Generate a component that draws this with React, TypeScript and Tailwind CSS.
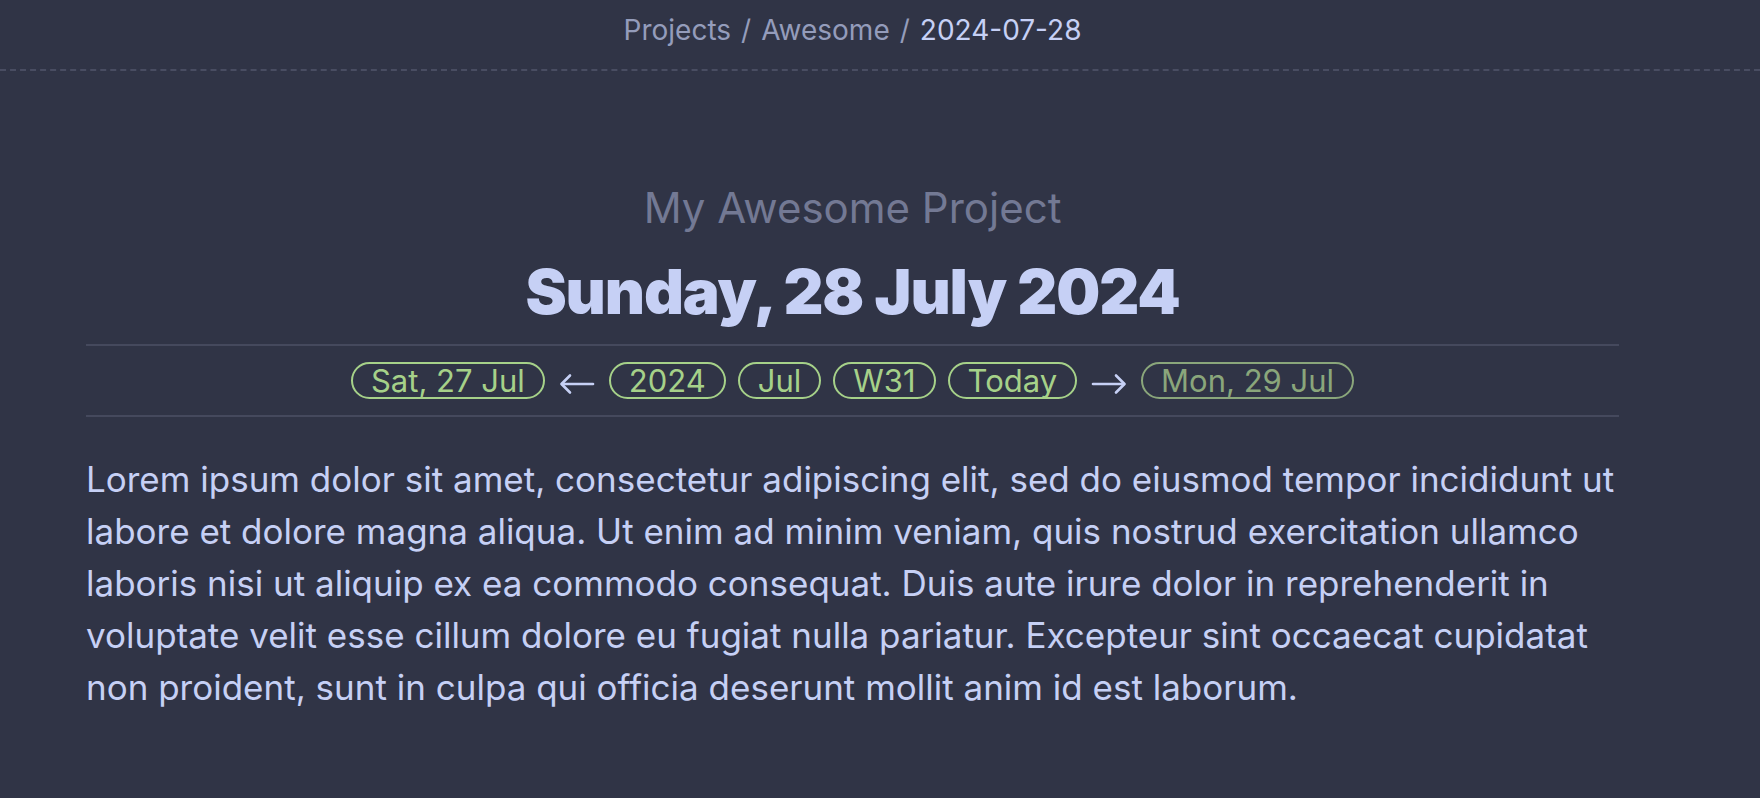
import React from 'react';

const pills = ['2024', 'Jul', 'W31', 'Today'];

const Pill: React.FC<{ label: string; dim?: boolean }> = ({ label, dim }) => (
  <span
    className={`inline-flex items-center rounded-full border-2 px-[18px] text-[31px] leading-[33px] ${
      dim ? 'border-[#8aa67b] text-[#8aa67b]' : 'border-[#a6d189] text-[#a6d189]'
    }`}
  >
    {label}
  </span>
);

// long thin arrow, like the one in the nav row
const Arrow: React.FC<{ dir: 'left' | 'right' }> = ({ dir }) => (
  <svg
    width="36"
    height="24"
    viewBox="0 0 36 24"
    fill="none"
    stroke="#c6d0f5"
    strokeWidth="2.6"
    strokeLinecap="round"
    strokeLinejoin="round"
    className={`mx-[2px] mt-[6px] ${dir === 'right' ? 'rotate-180' : ''}`}
  >
    <path d="M3 12h31" />
    <path d="M11 3.5 2.5 12l8.5 8.5" />
  </svg>
);

export default function App() {
  return (
    <div
      className="min-h-screen bg-[#303446] text-[#c6d0f5]"
      style={{ fontFamily: 'Inter, "Noto Sans", sans-serif' }}
    >
      <header className="flex h-[71px] items-center border-b-2 border-dashed border-[#494d62]">
        <nav className="ml-[86px] flex w-[1533px] justify-center gap-[10px] pb-[9px] text-[28px] text-[#949cbb]">
          <span>Projects</span>
          <span>/</span>
          <span>Awesome</span>
          <span>/</span>
          <span className="text-[#c6d0f5]">2024-07-28</span>
        </nav>
      </header>

      <main className="ml-[86px] w-[1533px]">
        <div className="pt-[112px] text-center">
          <p className="text-[42px] leading-[50px] text-[#737994]">My Awesome Project</p>
          <h1 className="mt-[24px] text-[62px] leading-[70px] font-black tracking-[-0.018em] text-[#c6d0f5]">
            Sunday, 28 July 2024
          </h1>
        </div>

        <div className="mt-[17px] flex items-center justify-center gap-[12px] border-y-2 border-[#45495d] py-[16px]">
          <Pill label="Sat, 27 Jul" />
          <Arrow dir="left" />
          {pills.map((p) => (
            <Pill key={p} label={p} />
          ))}
          <Arrow dir="right" />
          <Pill label="Mon, 29 Jul" dim />
        </div>

        <p className="mt-[36px] text-[35px] leading-[52px] text-[#c6d0f5]">
          Lorem ipsum dolor sit amet, consectetur adipiscing elit, sed do eiusmod tempor incididunt ut
          labore et dolore magna aliqua. Ut enim ad minim veniam, quis nostrud exercitation ullamco
          laboris nisi ut aliquip ex ea commodo consequat. Duis aute irure dolor in reprehenderit in
          voluptate velit esse cillum dolore eu fugiat nulla pariatur. Excepteur sint occaecat cupidatat
          non proident, sunt in culpa qui officia deserunt mollit anim id est laborum.
        </p>
      </main>
    </div>
  );
}
